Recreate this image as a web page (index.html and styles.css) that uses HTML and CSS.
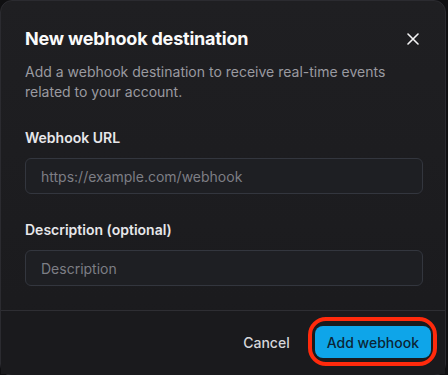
FILE: index.html
```html
<!DOCTYPE html>
<html lang="en">
<head>
<meta charset="UTF-8" />
<meta name="viewport" content="width=device-width, initial-scale=1" />
<title>New webhook destination</title>
<link rel="stylesheet" href="styles.css">
</head>
<body>

<!-- Dialog -->
<div class="dialog">
  <div class="dialog-head">
    <div class="title-row">
      <h2>New webhook destination</h2>
      <button class="close-btn" aria-label="Close">
        <svg width="12" height="12" viewBox="0 0 12 12" fill="none" stroke="#f4f4f5" stroke-width="1.6" stroke-linecap="round">
          <path d="M1 1 L11 11 M11 1 L1 11" />
        </svg>
      </button>
    </div>
    <p class="desc">Add a webhook destination to receive real-time events related to your account.</p>
  </div>

  <form class="dialog-body">
    <label class="field">
      <span>Webhook URL</span>
      <input type="text" placeholder="https://example.com/webhook" />
    </label>
    <label class="field">
      <span>Description (optional)</span>
      <input type="text" placeholder="Description" />
    </label>
  </form>

  <div class="dialog-foot">
    <button class="btn-ghost">Cancel</button>
    <button class="btn-primary">Add webhook</button>
  </div>
</div>

</body>
</html>
```

FILE: styles.css
```css
/* Reset and basics */
* {margin:0; padding:0; box-sizing:border-box;}
body, html {
  height: 100%;
  font-family: 'Inter', 'Noto Sans', sans-serif;
  background: #0f0f11;
  color: #f4f4f5;
  overflow: hidden;
}
button, input {font-family: inherit;}

/* Dialog shell */
.dialog {
  width: 446px;
  height: 376px;
  border: 1px solid #2b2b30;
  border-radius: 12px;
  background: linear-gradient(180deg, #1f1f22 0%, #1a1a1d 100%);
  display: flex;
  flex-direction: column;
}

/* Header */
.dialog-head {
  padding: 24px 24px 0;
}
.title-row {
  display: flex;
  align-items: center;
  justify-content: space-between;
}
.title-row h2 {
  font-size: 18px;
  line-height: 28px;
  font-weight: 700;
  color: #fafafa;
  letter-spacing: -0.2px;
}
.close-btn {
  background: none;
  border: none;
  width: 20px;
  height: 20px;
  display: flex;
  align-items: center;
  justify-content: center;
  margin-right: -2px;
  cursor: pointer;
}
.desc {
  margin-top: 9px;
  font-size: 14px;
  line-height: 20px;
  color: #9a9aa0;
}

/* Form */
.dialog-body {
  padding: 26px 24px 24px;
  display: flex;
  flex-direction: column;
  gap: 26px;
}
.field {
  display: flex;
  flex-direction: column;
  gap: 10px;
  margin-right: -2px;
}
.field span {
  font-size: 14px;
  line-height: 20px;
  font-weight: 600;
  color: #e7e7ea;
}
.field input {
  height: 36px;
  padding: 0 15px;
  border: 1px solid #33363e;
  border-radius: 6px;
  background: #1e1f23;
  color: #f4f4f5;
  font-size: 14px;
  outline: none;
}
.field input::placeholder {
  color: #7d7e85;
}

/* Footer */
.dialog-foot {
  border-top: 1px solid #2e2e33;
  padding: 15px 14px 16px 24px;
  display: flex;
  justify-content: flex-end;
  align-items: center;
  gap: 13px;
  background: #1a1a1d;
}
.btn-ghost {
  height: 32px;
  padding: 0 12px;
  background: none;
  border: none;
  color: #d6d6da;
  font-size: 14px;
  font-weight: 500;
  cursor: pointer;
}
.btn-primary {
  position: relative;
  height: 32px;
  padding: 0 12px;
  background: #0ea5e9;
  border: none;
  border-radius: 8px;
  color: #0b2536;
  font-size: 14px;
  font-weight: 500;
  cursor: pointer;
}
/* highlight ring */
.btn-primary::after {
  content: '';
  position: absolute;
  top: -9px; bottom: -8px;
  left: -7px; right: -6px;
  border: 4px solid #ff2a0c;
  border-radius: 18px;
}
```
